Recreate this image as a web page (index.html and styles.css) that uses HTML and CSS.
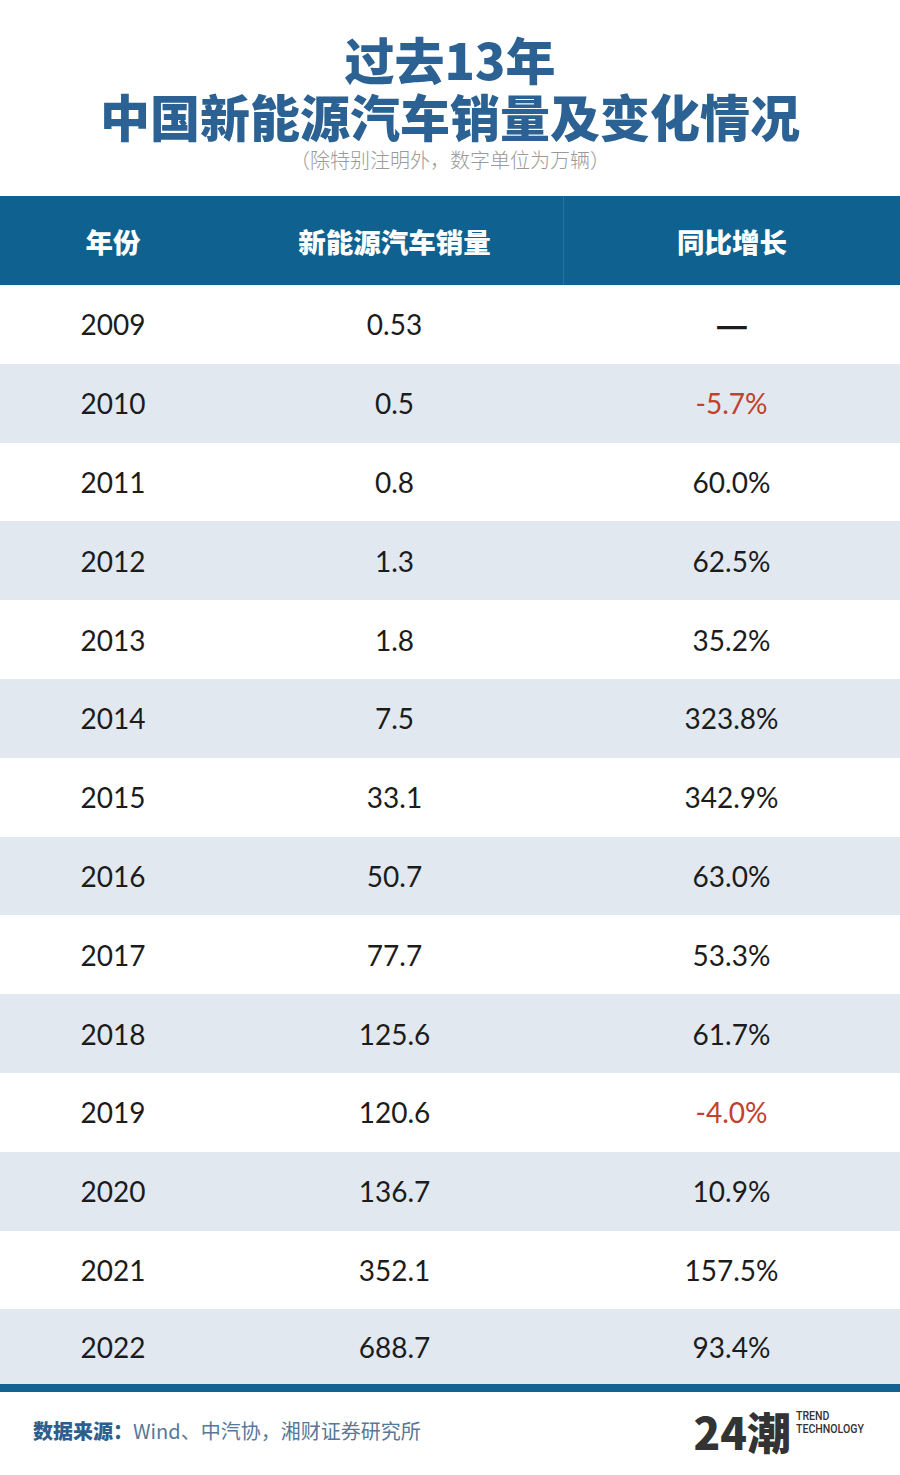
FILE: index.html
```html
<!DOCTYPE html>
<html lang="zh">
<head>
<meta charset="utf-8">
<link rel="stylesheet" href="styles.css">
</head>
<body>
<div class="page">
  <header class="title-block">
    <h1 class="title"><span class="tline">过去13年</span><span class="tline">中国新能源汽车销量及变化情况</span></h1>
    <p class="subtitle">（除特别注明外，数字单位为万辆）</p>
  </header>
  <div class="table">
    <div class="row head">
      <div class="c c1">年份</div>
      <div class="c c2">新能源汽车销量</div>
      <div class="c c3">同比增长</div>
    </div>
    <div class="row"><div class="c c1">2009</div><div class="c c2">0.53</div><div class="c c3"><span class="dash">—</span></div></div>
    <div class="row alt"><div class="c c1">2010</div><div class="c c2">0.5</div><div class="c c3 neg">-5.7%</div></div>
    <div class="row"><div class="c c1">2011</div><div class="c c2">0.8</div><div class="c c3">60.0%</div></div>
    <div class="row alt"><div class="c c1">2012</div><div class="c c2">1.3</div><div class="c c3">62.5%</div></div>
    <div class="row"><div class="c c1">2013</div><div class="c c2">1.8</div><div class="c c3">35.2%</div></div>
    <div class="row alt"><div class="c c1">2014</div><div class="c c2">7.5</div><div class="c c3">323.8%</div></div>
    <div class="row"><div class="c c1">2015</div><div class="c c2">33.1</div><div class="c c3">342.9%</div></div>
    <div class="row alt"><div class="c c1">2016</div><div class="c c2">50.7</div><div class="c c3">63.0%</div></div>
    <div class="row"><div class="c c1">2017</div><div class="c c2">77.7</div><div class="c c3">53.3%</div></div>
    <div class="row alt"><div class="c c1">2018</div><div class="c c2">125.6</div><div class="c c3">61.7%</div></div>
    <div class="row"><div class="c c1">2019</div><div class="c c2">120.6</div><div class="c c3 neg">-4.0%</div></div>
    <div class="row alt"><div class="c c1">2020</div><div class="c c2">136.7</div><div class="c c3">10.9%</div></div>
    <div class="row"><div class="c c1">2021</div><div class="c c2">352.1</div><div class="c c3">157.5%</div></div>
    <div class="row alt last"><div class="c c1">2022</div><div class="c c2">688.7</div><div class="c c3">93.4%</div></div>
  </div>
  <div class="bar"></div>
  <footer class="footer">
    <p class="source"><span class="src-label">数据来源：</span>Wind、中汽协，湘财证券研究所</p>
    <div class="logo">
      <span class="logo-mark">24潮</span>
      <span class="logo-text"><span>TREND</span><span>TECHNOLOGY</span></span>
    </div>
  </footer>
</div>
</body>
</html>
```
FILE: styles.css
```css
* { box-sizing: border-box; margin: 0; padding: 0; }
html, body { background: #ffffff; }
body { margin: 0; font-family: "Noto Sans CJK SC", "Noto Sans", sans-serif; }
.page { width: 900px; height: 1475px; background: #fff; }

.title-block { padding-top: 30px; text-align: center; height: 196px; }
.title {
  font-family: "Noto Sans CJK SC", sans-serif;
  font-weight: 900;
  font-size: 50px;
  color: #2b6193;
}
.tline { display: block; height: 57px; line-height: 57px; overflow: visible; }
.subtitle {
  margin-top: 3px;
  font-size: 20px;
  line-height: 26px;
  font-weight: 300;
  color: #9a9a9a;
}

.table { width: 900px; }
.row { display: grid; grid-template-columns: 226px 337px 337px; height: 78.8px; align-items: center; background: #fff; }
.row.alt { background: #e1e8f0; }
.row.last { height: 75px; }
.row.head { height: 89px; background: #0f6290; }
.row.head .c { color: #fff; font-family: "Noto Sans CJK SC", sans-serif; font-weight: 900; font-size: 27.5px; height: 100%; display: flex; align-items: center; justify-content: center; }
.row.head .c3 { border-left: 1px solid #2a719b; }
.c { text-align: center; font-family: "Lato", "Noto Sans", sans-serif; font-size: 28px; color: #1c1c1c; font-weight: 400; }
.c.neg { color: #c2402e; }
.dash { display: inline-block; font-family: "Noto Sans CJK SC", sans-serif; font-weight: 900; font-size: 28px; color: #1c1c1c; transform: scaleX(1.3); }

.bar { height: 8px; background: #14628f; }

.footer { display: flex; justify-content: space-between; align-items: center; padding: 16px 28px 0 33px; }
.source { font-size: 20px; color: #56789a; font-weight: 400; line-height: 30px; }
.src-label { color: #2e5f8c; font-weight: 900; }
.logo { display: flex; align-items: flex-start; gap: 5px; }
.logo-mark { font-family: "Noto Sans CJK SC", sans-serif; font-weight: 900; font-size: 44px; line-height: 46px; color: #333; letter-spacing: 0; }
.logo-text { display: flex; flex-direction: column; font-family: "Roboto", sans-serif; font-size: 12px; line-height: 13px; font-weight: 500; color: #333; padding-top: 2px; transform: scaleX(0.88); transform-origin: left; width: 76px; }
```
